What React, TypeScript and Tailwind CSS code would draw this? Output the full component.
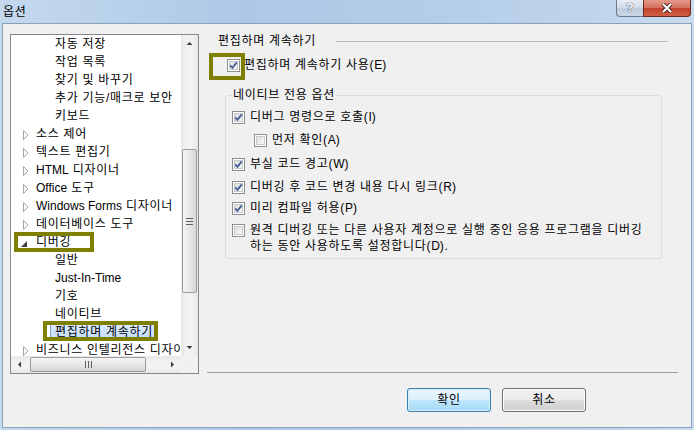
import React from "react";

type TreeItem = {
  label: string;
  lvl: 0 | 1;
  exp?: "closed" | "open";
  selected?: boolean;
  mark?: "parent" | "child";
};

const tree: TreeItem[] = [
  { label: "자동 저장", lvl: 1 },
  { label: "작업 목록", lvl: 1 },
  { label: "찾기 및 바꾸기", lvl: 1 },
  { label: "추가 기능/매크로 보안", lvl: 1 },
  { label: "키보드", lvl: 1 },
  { label: "소스 제어", lvl: 0, exp: "closed" },
  { label: "텍스트 편집기", lvl: 0, exp: "closed" },
  { label: "HTML 디자이너", lvl: 0, exp: "closed" },
  { label: "Office 도구", lvl: 0, exp: "closed" },
  { label: "Windows Forms 디자이너", lvl: 0, exp: "closed" },
  { label: "데이터베이스 도구", lvl: 0, exp: "closed" },
  { label: "디버깅", lvl: 0, exp: "open", mark: "parent" },
  { label: "일반", lvl: 1 },
  { label: "Just-In-Time", lvl: 1 },
  { label: "기호", lvl: 1 },
  { label: "네이티브", lvl: 1 },
  { label: "편집하며 계속하기", lvl: 1, selected: true, mark: "child" },
  { label: "비즈니스 인텔리전스 디자이너", lvl: 0, exp: "closed" },
];

// hangul in the reference font runs wider than Noto's, so spread it a little
// and keep latin words at normal spacing
const Txt = ({ s }: { s: string }) => (
  <>
    {s.split(/([A-Za-z][A-Za-z\- ]*[A-Za-z]|[A-Za-z])/).map((part, i) =>
      i % 2 === 1 ? (
        <span key={i} className="tracking-normal">
          {part}
        </span>
      ) : (
        part
      )
    )}
  </>
);

const Check = ({ checked }: { checked: boolean }) => (
  <span className="relative flex h-[13px] w-[13px] shrink-0 items-center justify-center border border-[#8e8f8f] bg-white">
    <span className="absolute inset-[1px] border border-[#c6cbd0] bg-[linear-gradient(135deg,#dedede,#f8f8f8)]" />
    {checked && (
      <svg width="11" height="11" viewBox="0 0 11 11" className="relative">
        <path d="M2.2 5.4 L4.4 7.8 L8.8 2.4" fill="none" stroke="#4a5f97" strokeWidth="1.9" />
      </svg>
    )}
  </span>
);

const Arrow = ({ dir }: { dir: "up" | "down" | "left" | "right" }) => {
  const d = {
    up: "M0.5 4 L3.5 1 L6.5 4 Z",
    down: "M0.5 1 L3.5 4 L6.5 1 Z",
    left: "M4 0.5 L1 3.5 L4 6.5 Z",
    right: "M1 0.5 L4 3.5 L1 6.5 Z",
  }[dir];
  const vert = dir === "up" || dir === "down";
  return (
    <svg width={vert ? 7 : 5} height={vert ? 5 : 7} viewBox={vert ? "0 0 7 5" : "0 0 5 7"}>
      <path d={d} fill="#3c3c3c" />
    </svg>
  );
};

const TreeRow = ({ item }: { item: TreeItem }) => (
  <div className="relative flex h-[18px] items-center whitespace-nowrap">
    {item.exp === "closed" && (
      <svg width="6" height="10" viewBox="0 0 6 10" className="absolute left-[12px] top-[5px]">
        <path d="M0.5 0.5 L5 5 L0.5 9.5 Z" fill="#ffffff" stroke="#a5a5a5" />
      </svg>
    )}
    {item.exp === "open" && (
      <svg width="6" height="6" viewBox="0 0 6 6" className="absolute left-[10px] top-[8px]">
        <path d="M6 0 L6 6 L0 6 Z" fill="#404040" />
      </svg>
    )}
    {item.selected ? (
      <span className="ml-[39px] flex h-[17px] items-center rounded-[2px] border border-[#7da2ce] bg-[linear-gradient(#dcebfc,#c1dbfc)] px-[4px] leading-[15px]">
        <Txt s={item.label} />
      </span>
    ) : (
      <span className={item.lvl === 0 ? "ml-[25px] leading-[18px]" : "ml-[44px] leading-[18px]"}>
        <Txt s={item.label} />
      </span>
    )}
    {item.mark === "parent" && (
      <span className="absolute left-[3px] top-[-1px] h-[20px] w-[80px] border-[4px] border-[#7f7f00]" />
    )}
    {item.mark === "child" && (
      <span className="absolute left-[32px] top-[-2px] h-[20px] w-[115px] border-[4px] border-[#7f7f00]" />
    )}
  </div>
);

const OptionsTree = () => (
  <div className="ml-[7px] mt-[10px] grid h-[340px] w-[189px] shrink-0 grid-cols-[1fr_17px] grid-rows-[1fr_17px] border border-[#828790] bg-white">
    <div className="overflow-hidden">
      {tree.map((item) => (
        <TreeRow key={item.label} item={item} />
      ))}
    </div>
    {/* vertical scrollbar */}
    <div className="flex flex-col bg-[linear-gradient(to_right,#e6e6e6,#f2f2f2_30%,#f2f2f2_70%,#e6e6e6)]">
      <div className="flex h-[17px] items-center justify-center">
        <Arrow dir="up" />
      </div>
      <div className="relative flex-1">
        <div className="absolute left-[1px] right-[1px] top-[97px] flex h-[144px] flex-col items-center justify-center gap-[2px] rounded-[2px] border border-[#9d9d9d] bg-[linear-gradient(to_right,#f4f4f4,#e8e8e8_50%,#d6d6d6)]">
          <span className="h-[1px] w-[7px] bg-[#5f5f5f]" />
          <span className="h-[1px] w-[7px] bg-[#5f5f5f]" />
          <span className="h-[1px] w-[7px] bg-[#5f5f5f]" />
        </div>
      </div>
      <div className="flex h-[17px] items-center justify-center">
        <Arrow dir="down" />
      </div>
    </div>
    {/* horizontal scrollbar */}
    <div className="flex bg-[linear-gradient(#e6e6e6,#f2f2f2_30%,#f2f2f2_70%,#e6e6e6)]">
      <div className="flex w-[17px] items-center justify-center">
        <Arrow dir="left" />
      </div>
      <div className="relative flex-1">
        <div className="absolute bottom-[1px] left-[2px] top-[1px] flex w-[116px] items-center justify-center gap-[2px] rounded-[2px] border border-[#9d9d9d] bg-[linear-gradient(#f4f4f4,#e8e8e8_50%,#d6d6d6)]">
          <span className="h-[7px] w-[1px] bg-[#5f5f5f]" />
          <span className="h-[7px] w-[1px] bg-[#5f5f5f]" />
          <span className="h-[7px] w-[1px] bg-[#5f5f5f]" />
        </div>
      </div>
      <div className="flex w-[17px] items-center justify-center">
        <Arrow dir="right" />
      </div>
    </div>
    <div className="bg-[#f0f0f0]" />
  </div>
);

const OptionRow = ({ checked, lines, className }: { checked: boolean; lines: string[]; className: string }) => (
  <div className={`flex items-start gap-[5px] ${className}`}>
    <span className="mt-[2px]">
      <Check checked={checked} />
    </span>
    <span className="leading-[16px]">
      {lines.map((l, i) => (
        <React.Fragment key={i}>
          {i > 0 && <br />}
          <Txt s={l} />
        </React.Fragment>
      ))}
    </span>
  </div>
);

const DialogButton = ({ label, focused }: { label: string; focused?: boolean }) => (
  <button
    className={
      focused
        ? "h-[24px] w-[84px] rounded-[3px] border border-[#3c7fb1] bg-[linear-gradient(#eaf6fd,#d9f0fc_50%,#bee6fd_50%,#a7d9f5)] text-[12px] shadow-[inset_0_0_0_1px_#d2eefb]"
        : "h-[24px] w-[84px] rounded-[3px] border border-[#707070] bg-[linear-gradient(#f2f2f2,#ebebeb_50%,#dddddd_50%,#cfcfcf)] text-[12px] shadow-[inset_0_0_0_1px_#fcfcfc]"
    }
  >
    {label}
  </button>
);

export default function App() {
  return (
    <div className="flex h-[430px] w-[694px] flex-col bg-[linear-gradient(to_right,#c4d9ee,#adc8e6_35%,#b5cde8_65%,#c8dbef)] font-['Liberation_Sans','Noto_Sans_CJK_KR',sans-serif] text-[12px] tracking-[0.7px] text-black">
      {/* title bar */}
      <div className="flex h-[23px] shrink-0 items-start">
        <span className="ml-[3px] mt-[3px] leading-[18px]">옵션</span>
        <div className="ml-auto mr-[3px] flex h-[17px]">
          <div className="flex w-[27px] items-center justify-center rounded-bl-[4px] border border-r-0 border-t-0 border-[#6d7b8d] bg-[linear-gradient(#e6ecf3,#d1dbe7_50%,#bfccdc_50%,#c9d5e4)]">
            <span className="text-[13px] font-bold leading-[14px] text-white [text-shadow:0_0_1px_#2a3a55,0_0_1px_#2a3a55]">?</span>
          </div>
          <div className="flex w-[48px] items-center justify-center rounded-br-[4px] border border-t-0 border-[#6b2a22] bg-[linear-gradient(#e59a8a,#d26f5c_50%,#c0402c_50%,#cf5f45)]">
            <svg width="12" height="10" viewBox="0 0 12 10">
              <path d="M2 1 L10 9 M10 1 L2 9" stroke="#4a1c16" strokeWidth="4" />
              <path d="M2 1 L10 9 M10 1 L2 9" stroke="#ffffff" strokeWidth="2.2" />
            </svg>
          </div>
        </div>
      </div>

      {/* client area */}
      <div className="mx-[2px] flex h-[405px] shrink-0 border border-[#8ba2bd] bg-[#f0f0f0]">
        <OptionsTree />

        <div className="ml-[8px] flex w-[471px] flex-col">
          <div className="mt-[9px] flex h-[16px] items-center">
            <span className="ml-[11px] leading-[16px]">편집하며 계속하기</span>
            <span className="ml-[20px] mr-[10px] h-[1px] flex-1 bg-[#b6bcc6]" />
          </div>

          <div className="relative ml-[20px] mt-[9px] flex h-[14px] items-center gap-[4px]">
            <Check checked />
            <span className="leading-[14px]">
              <Txt s="편집하며 계속하기 사용(E)" />
            </span>
            <span className="absolute left-[-18px] top-[-5px] h-[27px] w-[36px] border-[4px] border-[#7f7f00]" />
          </div>

          <div className="relative ml-[18px] mt-[23px] h-[164px] w-[437px] rounded-[3px] border border-[#d5dfe5]">
            <span className="absolute left-[6px] top-[-9px] bg-[#f0f0f0] px-[1px] leading-[16px]">네이티브 전용 옵션</span>
            <div className="flex flex-col pl-[6px] pt-[13px]">
              <OptionRow checked lines={["디버그 명령으로 호출(I)"]} className="" />
              <OptionRow checked={false} lines={["먼저 확인(A)"]} className="ml-[22px] mt-[7px]" />
              <OptionRow checked lines={["부실 코드 경고(W)"]} className="mt-[8px]" />
              <OptionRow checked lines={["디버깅 후 코드 변경 내용 다시 링크(R)"]} className="mt-[7px]" />
              <OptionRow checked lines={["미리 컴파일 허용(P)"]} className="mt-[5px]" />
              <OptionRow
                checked={false}
                lines={[
                  "원격 디버깅 또는 다른 사용자 계정으로 실행 중인 응용 프로그램을 디버깅",
                  "하는 동안 사용하도록 설정합니다(D).",
                ]}
                className="mt-[6px]"
              />
            </div>
          </div>

          <div className="mt-auto border-t border-[#a0a0a0]" />
          <div className="mb-[15px] mt-[15px] flex justify-end gap-[11px] pr-[92px]">
            <DialogButton label="확인" focused />
            <DialogButton label="취소" />
          </div>
        </div>
      </div>
    </div>
  );
}
